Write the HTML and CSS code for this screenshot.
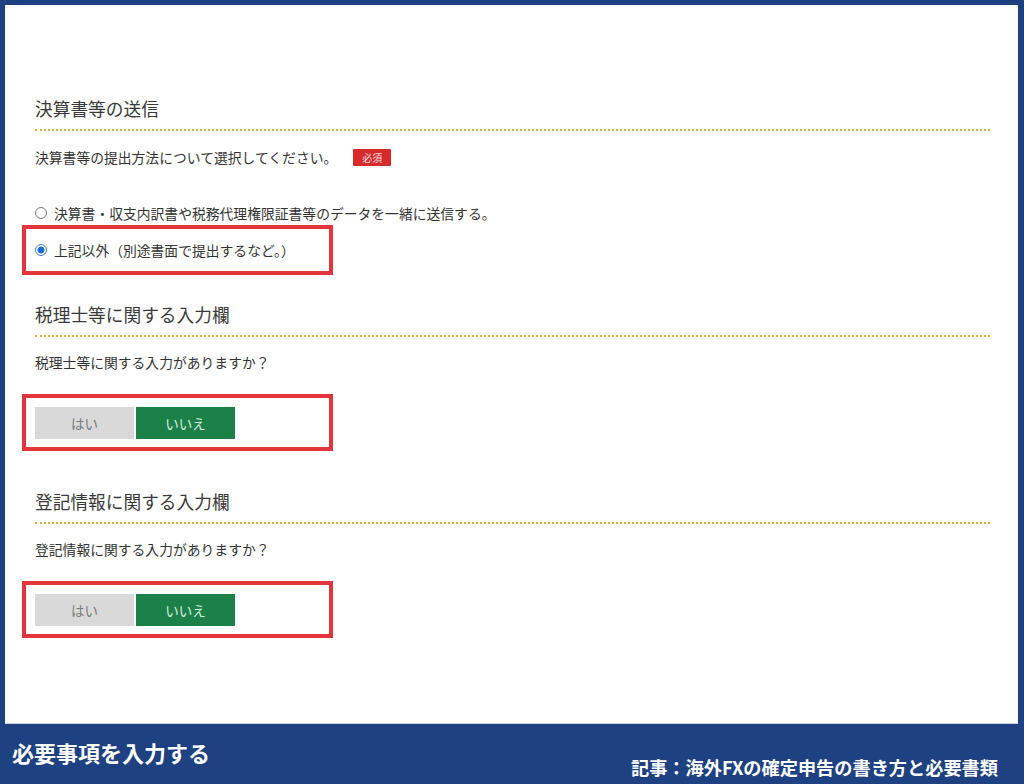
FILE: index.html
```html
<!DOCTYPE html>
<html lang="ja">
<head>
<meta charset="utf-8">
<title>決算書等の送信</title>
<link rel="stylesheet" href="styles.css">
</head>
<body>
<div class="page">
  <main class="frame">
    <section class="sec sec-first">
      <h2 class="sec-title">決算書等の送信</h2>
      <p class="question">決算書等の提出方法について選択してください。<span class="badge">必須</span></p>
      <div class="radio-row radio-plain"><span class="radio"></span><span>決算書・収支内訳書や税務代理権限証書等のデータを一緒に送信する。</span></div>
      <div class="hl hl-radio">
        <div class="radio-row"><span class="radio checked"></span><span>上記以外（別途書面で提出するなど。）</span></div>
      </div>
    </section>
    <section class="sec sec-second">
      <h2 class="sec-title">税理士等に関する入力欄</h2>
      <p class="question">税理士等に関する入力がありますか？</p>
      <div class="hl hl-toggle">
        <div class="toggle"><span class="opt">はい</span><span class="opt on">いいえ</span></div>
      </div>
    </section>
    <section class="sec sec-third">
      <h2 class="sec-title">登記情報に関する入力欄</h2>
      <p class="question">登記情報に関する入力がありますか？</p>
      <div class="hl hl-toggle">
        <div class="toggle"><span class="opt">はい</span><span class="opt on">いいえ</span></div>
      </div>
    </section>
  </main>
  <footer class="footer">
    <div class="footer-title">必要事項を入力する</div>
    <div class="footer-link">記事：海外FXの確定申告の書き方と必要書類</div>
  </footer>
</div>
</body>
</html>
```

FILE: styles.css
```css
* { box-sizing: border-box; }
html, body { margin: 0; padding: 0; }
body {
  width: 1024px;
  height: 784px;
  overflow: hidden;
  background: #1d4181;
  font-family: "Noto Sans CJK JP", "Noto Sans", sans-serif;
  color: #333;
}
.page { display: flex; flex-direction: column; height: 784px; }
.frame {
  height: 719px;
  margin: 5px 6px 0 5px;
  background: #fff;
  padding: 0 28px 0 30px;
  border-bottom: 1px solid #c9d3e3;
}
.sec-title {
  margin: 0;
  font-size: 17.7px;
  font-weight: 400;
  line-height: 24px;
  color: #3a3a3a;
  padding-bottom: 9px;
  border-bottom: 2px dotted #d9b13a;
}
.sec-first { padding-top: 91px; }
.sec-second { padding-top: 27px; }
.sec-third { padding-top: 38px; }
.question {
  margin: 16px 0 0;
  font-size: 13.8px;
  line-height: 20px;
  color: #333;
  display: flex;
  align-items: center;
}
.badge {
  display: inline-block;
  margin-left: 16px;
  background: #d72b2b;
  color: #f6dede;
  font-size: 10px;
  line-height: 17px;
  padding: 0 9px;
  border-radius: 1px;
}
.radio-row {
  display: flex;
  align-items: center;
  font-size: 13.8px;
  line-height: 20px;
  color: #333;
}
.radio-plain { margin-top: 36px; }
.radio {
  width: 12px;
  height: 12px;
  border: 1px solid #777;
  border-radius: 50%;
  margin-right: 7px;
  flex: none;
  background: #fff;
}
.radio.checked {
  border-color: #3d7fd0;
  background: radial-gradient(circle, #1a6fd6 0 3.2px, #fff 3.8px);
}
.hl {
  border: 4px solid #e4363a;
  width: 311px;
  margin-left: -13px;
}
.hl-radio {
  margin-top: 2px;
  height: 50px;
  padding: 11px 9px;
}
.sec-second .question, .sec-third .question { margin-top: 15px; }
.hl-toggle {
  margin-top: 22px;
  height: 57px;
  padding: 9px 9px;
}
.toggle { display: flex; }
.opt {
  width: 99px;
  height: 32px;
  display: flex;
  align-items: center;
  justify-content: center;
  font-size: 13.5px;
  background: #d9d9d9;
  color: #7a7a7a;
}
.opt.on {
  background: #1b8149;
  color: #d8efe0;
  border-left: 2px solid #fff;
  width: 101px;
}
.footer {
  flex: 1;
  color: #fff;
  font-weight: 700;
  padding: 0 26px 0 12px;
}
.footer-title {
  font-size: 22px;
  line-height: 28px;
  margin-top: 14px;
}
.footer-link {
  text-align: right;
  font-size: 18.2px;
  line-height: 22px;
  margin-top: -10px;
}
```
